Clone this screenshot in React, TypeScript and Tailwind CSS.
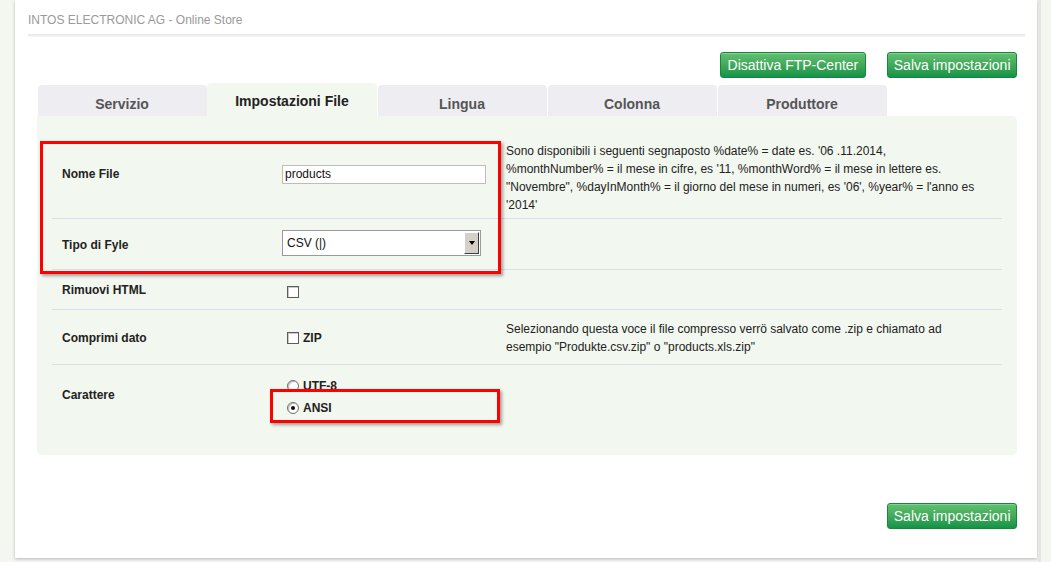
import React from 'react';

const tabs = ['Servizio', 'Impostazioni File', 'Lingua', 'Colonna', 'Produttore'];

function GreenButton({ label, tight }: { label: string; tight?: boolean }) {
  return (
    <button
      className={`h-[26px] rounded-[3px] border border-[#13893f] bg-linear-to-b from-[#62c070] to-[#129347] text-[14px] leading-none text-white shadow-[inset_0_1px_0_rgba(255,255,255,0.25)] ${
        tight ? 'px-[5.5px]' : 'px-[7px]'
      }`}
    >
      {label}
    </button>
  );
}

function Checkbox() {
  return <span className="inline-block h-[12px] w-[12px] border border-[#5c5c5c] bg-white shadow-[inset_1px_1px_0_#c8c8c8]" />;
}

function Radio({ checked }: { checked?: boolean }) {
  return (
    <span className="inline-flex h-[12px] w-[12px] items-center justify-center rounded-full border border-[#6e6e6e] bg-white shadow-[inset_1px_1px_1px_#bdbdbd]">
      {checked ? <span className="h-[4px] w-[4px] rounded-full bg-[#111]" /> : null}
    </span>
  );
}

export default function App() {
  return (
    <div className="flex h-[562px] w-[1051px] overflow-hidden bg-[#f3f7f0] font-['Liberation_Sans',Arial,sans-serif]">
      <div className="w-[15px] shrink-0" />
      <div className="h-[558px] w-[1022px] shrink-0 bg-white shadow-[0_1px_3px_rgba(0,0,0,0.25)]">
        <div className="px-[13px] pt-[13px]">
          <div className="text-[12px] leading-[14px] text-[#9a9a9a]">INTOS ELECTRONIC AG - Online Store</div>
          <div className="mt-[7px] h-[3px] w-[997px] bg-linear-to-b from-[#e6e6e6] to-[#f8f8f8]" />
        </div>

        <div className="pl-[22px] pr-[20px]">
          <div className="mt-[15px] flex justify-end gap-[21px]">
            <GreenButton label="Disattiva FTP-Center" />
            <GreenButton label="Salva impostazioni" tight />
          </div>

          <div className="mt-[5px] flex items-end">
            {tabs.map((t, i) =>
              i === 1 ? (
                <div
                  key={t}
                  className="flex h-[33px] w-[170px] items-start justify-center rounded-t-[4px] bg-[#f2f7ef] pt-[8px] text-[14px] font-bold text-[#222]"
                >
                  {t}
                </div>
              ) : (
                <div
                  key={t}
                  className="mx-[0.5px] flex h-[31px] w-[169px] items-start justify-center rounded-t-[4px] bg-[#ededf2] pt-[9px] text-[14px] font-bold text-[#555]"
                >
                  {t}
                </div>
              )
            )}
          </div>

          <div className="relative h-[339px] rounded-b-[5px] rounded-tr-[5px] bg-[#f2f7ef] px-[15px] pt-[14px] text-[12px] text-[#222]">
            {/* Nome File */}
            <div className="flex h-[89px] border-b border-[#dcdcec]">
              <div className="flex w-[230px] items-center pl-[10px] font-bold">Nome File</div>
              <div className="flex w-[224px] items-center">
                <div className="flex h-[19px] w-[204px] items-center border border-[#bdbdbd] bg-white pl-[2px] text-[12px] text-[#111]">
                  products
                </div>
              </div>
              <div className="w-[480px] pt-[12px] leading-[18px] text-[#222]">
                Sono disponibili i seguenti segnaposto %date% = date es. '06 .11.2014, %monthNumber% = il mese in cifre, es '11, %monthWord% = il mese in lettere es. "Novembre", %dayInMonth% = il giorno del mese in numeri, es '06', %year% = l'anno es '2014'
              </div>
            </div>

            {/* Tipo di Fyle */}
            <div className="flex h-[51px] border-b border-[#dcdcec]">
              <div className="flex w-[230px] items-center pl-[10px] pt-[1px] font-bold">Tipo di Fyle</div>
              <div className="flex w-[224px] items-center">
                <div className="-mt-[2px] flex h-[26px] w-[199px] items-center justify-between border border-[#9a9a9a] bg-white pl-[4px] pr-[1px]">
                  <span className="text-[12px] text-[#111]">CSV (|)</span>
                  <span className="flex h-[22px] w-[15px] items-center justify-center border border-t-white border-l-white border-r-[#404040] border-b-[#404040] bg-[#d4d0c8]">
                    <span className="h-0 w-0 border-x-[3.5px] border-t-[4px] border-x-transparent border-t-black" />
                  </span>
                </div>
              </div>
            </div>

            {/* Rimuovi HTML */}
            <div className="flex h-[40px] border-b border-[#dcdcec]">
              <div className="flex w-[230px] items-start pl-[10px] pt-[11px] font-bold">Rimuovi HTML</div>
              <div className="flex w-[224px] items-start pl-[5px] pt-[16px]">
                <Checkbox />
              </div>
            </div>

            {/* Comprimi dato */}
            <div className="flex h-[55px] border-b border-[#dcdcec]">
              <div className="flex w-[230px] items-center pl-[10px] pt-[2px] font-bold">Comprimi dato</div>
              <div className="flex w-[224px] items-center gap-[4px] pl-[5px] pt-[2px]">
                <Checkbox />
                <span className="font-bold">ZIP</span>
              </div>
              <div className="w-[480px] pt-[10px] leading-[18px] text-[#222]">
                Selezionando questa voce il file compresso verrö salvato come .zip e chiamato ad esempio "Produkte.csv.zip" o "products.xls.zip"
              </div>
            </div>

            {/* Carattere */}
            <div className="flex h-[70px]">
              <div className="flex w-[230px] items-start pl-[10px] pt-[21px] font-bold">Carattere</div>
              <div className="flex w-[224px] flex-col gap-[8px] pl-[5px] pt-[14px]">
                <label className="flex items-center gap-[4px] font-bold leading-[14px]">
                  <Radio />
                  UTF-8
                </label>
                <label className="flex items-center gap-[4px] font-bold leading-[14px]">
                  <Radio checked />
                  ANSI
                </label>
              </div>
            </div>

            {/* red annotation boxes */}
            <div className="absolute left-[3px] top-[25px] h-[133px] w-[461px] border-[3px] border-[#f00] shadow-[2px_2px_3px_rgba(0,0,0,0.35)]" />
            <div className="absolute left-[233px] top-[273px] h-[34px] w-[230px] border-[3px] border-[#f00] shadow-[2px_2px_3px_rgba(0,0,0,0.35)]" />
          </div>

          <div className="mt-[48px] flex justify-end">
            <GreenButton label="Salva impostazioni" tight />
          </div>
        </div>
      </div>
      <div className="ml-[1px] h-full w-[13px] shrink-0 border-l-[3px] border-[#e4e8e2] bg-[#f3f7f0]" />
    </div>
  );
}
